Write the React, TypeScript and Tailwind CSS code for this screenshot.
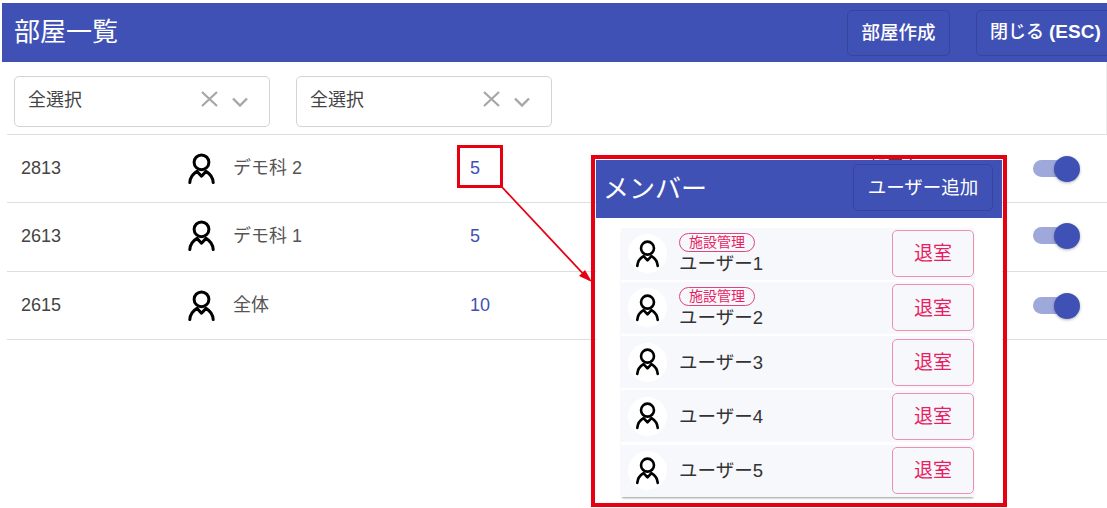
import React from "react";

const FONT = "[font-family:'Liberation_Sans','Noto_Sans_CJK_JP',sans-serif]";

function PersonIcon({ className }: { className: string }) {
  return (
    <svg viewBox="0 0 27 32" className={className} fill="none" stroke="#000" strokeWidth="3" strokeLinecap="round" strokeLinejoin="round">
      <circle cx="13.5" cy="9.3" r="7.4" />
      <path d="M1.8 29.6C2.2 24.6 4.8 20.8 9 18.4L13.5 23.2L18 18.4C22.2 20.8 24.8 24.6 25.2 29.6" />
    </svg>
  );
}

function Toggle() {
  return (
    <div className="relative h-[26px] w-[47px]">
      <div className="absolute left-0 top-[4px] h-[17px] w-[42px] rounded-full bg-[#9fa8da]" />
      <div className="absolute right-0 top-0 h-[26px] w-[26px] rounded-full bg-[#3f51b5] shadow-[0_1px_3px_rgba(0,0,0,0.3)]" />
    </div>
  );
}

function SelectBox() {
  return (
    <div className="flex h-[51px] w-[256px] items-center rounded-[5px] border border-[#d4d4d4] bg-white pl-[13px] pr-[21px]">
      <span className="mb-[3px] flex-1 text-[18px] text-[#444]">全選択</span>
      <svg viewBox="0 0 17 16" className="mb-[6px] mr-[14px] h-[16px] w-[17px]" fill="none" stroke="#a6a6a6" strokeWidth="2.2">
        <path d="M1 1L16 15M16 1L1 15" />
      </svg>
      <svg viewBox="0 0 16 10" className="h-[10px] w-[16px]" fill="none" stroke="#a6a6a6" strokeWidth="2.4">
        <path d="M1 1.5L8 8.5L15 1.5" />
      </svg>
    </div>
  );
}

const rows = [
  { id: "2813", name: "デモ科 2", count: "5", h: "h-[68px]", extra: true },
  { id: "2613", name: "デモ科 1", count: "5", h: "h-[69px] pb-[2px]", extra: false },
  { id: "2615", name: "全体", count: "10", h: "h-[68px]", extra: false },
];

const members = [
  { name: "ユーザー1", tag: true },
  { name: "ユーザー2", tag: true },
  { name: "ユーザー3", tag: false },
  { name: "ユーザー4", tag: false },
  { name: "ユーザー5", tag: false },
];

function MemberRow({ name, tag }: { name: string; tag: boolean }) {
  return (
    <div className="flex h-[52px] items-center bg-[#f7f8fc] pl-[7px]">
      <div className="flex h-[39px] w-[39px] shrink-0 items-center justify-center rounded-full bg-white">
        <PersonIcon className="h-[28px] w-[25px]" />
      </div>
      <div className="ml-[12px] flex flex-1 flex-col">
        {tag && (
          <span className="flex h-[19px] w-[76px] items-center justify-center rounded-full border-[1.5px] border-[#e0457b] text-[14px] leading-none text-[#e91e63]">
            施設管理
          </span>
        )}
        <span className="text-[18.5px] leading-[23px] text-[#333]">{name}</span>
      </div>
      <button className="flex h-[47px] w-[82px] items-center justify-center rounded-[5px] border border-[#ee8fb0] pt-[2px] text-[19px] text-[#e91e63]">
        退室
      </button>
    </div>
  );
}

export default function App() {
  return (
    <div className={`relative h-[508px] w-[1107px] overflow-hidden bg-white pt-[3px] ${FONT}`}>
      <header className="ml-[2px] flex h-[59px] items-center justify-between bg-[#3f51b5] pl-[12px] text-white">
        <h1 className="text-[26px] font-normal">部屋一覧</h1>
        <div className="-mr-[6px] flex items-center gap-[26px]">
          <button className="flex h-[46px] w-[103px] items-center justify-center rounded-[5px] border border-[#35459c] text-[18.5px] font-medium">
            部屋作成
          </button>
          <button className="flex h-[46px] w-[137px] items-center justify-start rounded-[5px] border border-[#35459c] pl-[13px] text-[18px] font-medium whitespace-nowrap">
            閉じる <span className="ml-[5px] text-[19px] font-bold">(ESC)</span>
          </button>
        </div>
      </header>

      <div className="flex h-[72px] gap-[26px] border-r border-[#ececec] pl-[14px] pt-[14px]">
        <SelectBox />
        <SelectBox />
      </div>

      <div className="ml-[7px]">
        {rows.map((r) => (
          <div key={r.id} className={`flex items-center border-t border-[#dedede] pr-[27px] ${r.h} text-[18px] text-[#444]`}>
            <span className="w-[181px] pl-[14px]">{r.id}</span>
            <PersonIcon className="h-[32px] w-[27px]" />
            <span className="ml-[18px] w-[237px] text-[#555]">{r.name}</span>
            <span className="w-[398px] text-[#3f51b5]">{r.count}</span>
            <span className="flex-1 text-[#444]">{r.extra ? "部屋名" : ""}</span>
            <Toggle />
          </div>
        ))}
        <div className="border-t border-[#dedede]" />
      </div>

      {/* callout over the table */}
      <div className="absolute left-[457px] top-[145px] h-[43px] w-[46px] border-[3.5px] border-[#e60012]" />
      <svg className="absolute left-[495px] top-[180px] h-[110px] w-[105px]" viewBox="0 0 105 110" fill="none">
        <path d="M6 6L94 100" stroke="#e60012" strokeWidth="1.8" />
        <path d="M97 102L84 96L90 90Z" fill="#e60012" />
      </svg>
      <div className="absolute left-[591px] top-[155px] h-[352px] w-[416px] border-[4px] border-[#e60012] p-[1px]">
        <div className="h-full bg-white">
          <div className="flex h-[58px] items-center justify-between bg-[#3f51b5] pl-[7px] pr-[9px] text-white">
            <span className="text-[26px]">メンバー</span>
            <button className="mb-[3px] flex h-[47px] w-[140px] items-center justify-center rounded-[5px] border border-[#35459c] text-[18.5px]">
              ユーザー追加
            </button>
          </div>
          <div className="ml-[25px] mt-[9.5px] flex w-[353px] flex-col gap-[2.3px] shadow-[0_2px_2px_-1px_rgba(0,0,0,0.4)]">
            {members.map((m) => (
              <MemberRow key={m.name} name={m.name} tag={m.tag} />
            ))}
          </div>
        </div>
      </div>
    </div>
  );
}
